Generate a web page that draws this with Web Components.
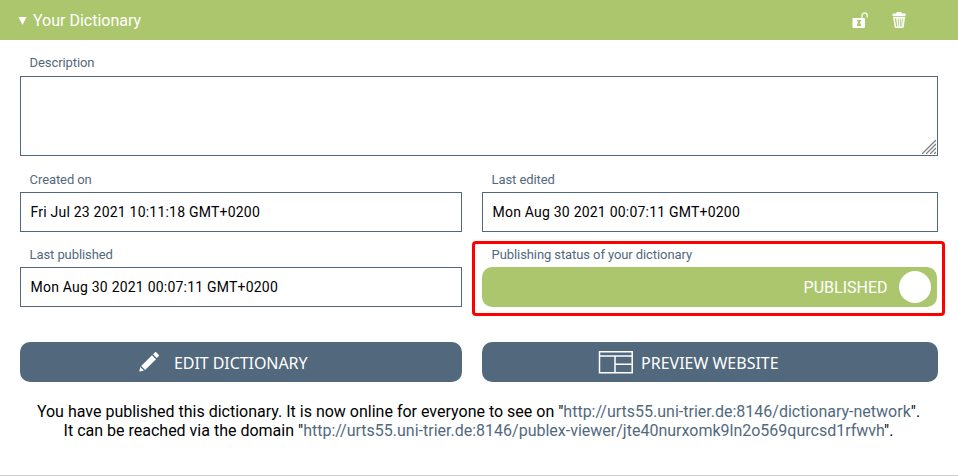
<!DOCTYPE html>
<html lang="en">
<head>
<meta charset="utf-8">
<title>Your Dictionary</title>
<style>
html,body{margin:0;background:#fff;overflow:hidden}
body{font-family:Roboto,"Liberation Sans",sans-serif;color:#000;height:476px}
</style>
</head>
<body>
<dictionary-page></dictionary-page>
<script>
function define(name, html) {
  const t = document.createElement('template');
  t.innerHTML = html;
  customElements.define(name, class extends HTMLElement {
    constructor() {
      super();
      this.attachShadow({mode: 'open'}).appendChild(t.content.cloneNode(true));
    }
  });
}

define('panel-header', `
<style>
:host{display:flex;align-items:center;height:40px;box-sizing:border-box;padding:0 51px 0 18px;background:#acc66d;color:#fff;font-size:16px}
.arrow{width:9px;height:8px;margin:1px 6px 0 0;display:block}
.title{flex:1;line-height:20px;padding-top:2px}
.lock{margin-right:23px}
svg{display:block}
</style>
<svg class="arrow" viewBox="0 0 9 8"><path fill="#fff" d="M.500 0h8L4.500 8z"/></svg>
<span class="title"><slot></slot></span>
<svg class="lock" width="17" height="17" viewBox="0 0 17 17"><path fill="#fff" fill-rule="evenodd" d="M1.500 6H12q1 0 1 1v8q0 1-1 1H1.500q-1 0-1-1V7q0-1 1-1zM5 8v1.500h1v1L5 13v1h4v-1l-1-2.500v-1h1V8z"/><path fill="none" stroke="#fff" stroke-opacity=".85" stroke-width="1.400" d="M10 6V3.500C10 .2 15.200.2 15.200 3.500V5.500"/></svg>
<svg width="15" height="18" viewBox="0 0 15 18"><path fill="#fff" d="M4.500 1h5v1.500h3.200q1 0 1 1V5H.500V3.500q0-1 1-1h3z"/><path fill="#fff" fill-opacity=".95" fill-rule="evenodd" d="M1 5.800h12.200L11.800 16q-.2 1-1.200 1H3.800q-1 0-1.200-1zM2.800 7.500 4.200 15.500h.9L4.200 7.500zM6 7.500v8h.7v-8zM8 7.500v8h.7l.1-8zM10.800 7.500 10 15.500h-.7l.8-8z"/></svg>
`);

define('form-field', `
<style>
:host{display:block;min-width:0}
.label{height:16px;line-height:16px;margin:0 0 5px;padding-left:9.600px;font-size:13px;letter-spacing:-.09px;color:#52697d;white-space:nowrap}
:host(.low) .label{height:17px;line-height:18px;margin-bottom:4px}
</style>
<div class="label"><slot name="label"></slot></div><slot></slot>
`);

define('text-value', `
<style>
:host{display:block;box-sizing:border-box;height:40px;border:1px solid #52697d;padding:0 9.600px;line-height:38px;font-size:14px;letter-spacing:.21px;white-space:nowrap}
</style><slot></slot>
`);

define('text-area', `
<style>
:host{display:flex;align-items:flex-end;justify-content:flex-end;box-sizing:border-box;height:80px;border:1px solid #52697d}
svg{display:block;margin:0 1px 1px 0}
</style>
<svg width="14" height="14" viewBox="0 0 14 14"><path fill="none" stroke="#808080" stroke-width="1.300" d="M0 14 14 0M4 14 14 4M8 14 14 8M12 14l2-2"/></svg>
`);

define('status-toggle', `
<style>
:host{display:flex;align-items:center;justify-content:flex-end;box-sizing:border-box;height:40px;margin-right:1px;padding-right:6px;border-radius:10px;background:#acc66d;color:#fff;font-size:16px}
i{width:32px;height:32px;border-radius:50%;background:#fff;margin-left:11.500px}
</style><slot></slot><i></i>
`);

define('action-button', `
<style>
:host{display:flex;align-items:center;box-sizing:border-box;height:40px;border-radius:10px;background:#52697d;color:#fff;font:16px/40px "Noto Sans",sans-serif;white-space:nowrap}
span{padding-top:2px}
:host(.edit) span{letter-spacing:-.07px}
</style><slot name="icon"></slot><span><slot></slot></span>
`);

define('highlight-frame', `
<style>
:host{position:absolute;left:-10px;top:-5px;width:473px;height:75px;box-sizing:border-box;border:3px solid #f00;border-radius:4px;pointer-events:none}
</style>
`);

define('dictionary-page', `
<style>
:host{display:flex;flex-direction:column;height:476px;box-sizing:border-box;border-bottom:1px solid #ccc}
main{padding:15px 20px 0;display:flex;flex-direction:column}
.grid{display:grid;grid-template-columns:442px 456px;column-gap:20px;row-gap:14px;margin-top:15px}
.actions{display:grid;grid-template-columns:442px 456px;column-gap:20px;margin-top:35px}
.status{position:relative}
.edit{padding-left:118px}.preview{padding-left:116px}
.edit svg{margin-right:13px}.preview svg{margin-right:7px}
svg{display:block}
p{margin:20px 0 0;font-size:16px;line-height:19px;text-align:center;white-space:nowrap;position:relative;left:-.5px}
a{color:#52697d}
</style>
<panel-header>Your Dictionary</panel-header>
<main>
<form-field><span slot="label">Description</span><text-area></text-area></form-field>
<div class="grid">
<form-field class="low"><span slot="label">Created on</span><text-value>Fri Jul 23 2021 10:11:18 GMT+0200</text-value></form-field>
<form-field class="low"><span slot="label">Last edited</span><text-value>Mon Aug 30 2021 00:07:11 GMT+0200</text-value></form-field>
<form-field class="low"><span slot="label">Last published</span><text-value>Mon Aug 30 2021 00:07:11 GMT+0200</text-value></form-field>
<form-field class="low status"><span slot="label">Publishing status of your dictionary</span><status-toggle>PUBLISHED</status-toggle><highlight-frame></highlight-frame></form-field>
</div>
<div class="actions">
<action-button class="edit"><svg slot="icon" width="23" height="22" viewBox="0 0 23 22"><path fill="#fff" d="M1.300 20.500 2.200 16 6 19.700zM3.200 15 14 4.300l4 4L7.100 18.900zM15 3.300 17 1.300q.6-.5 1.200 0l2.600 2.600q.5.6 0 1.200l-2 2z"/></svg>EDIT DICTIONARY</action-button>
<action-button class="preview"><svg slot="icon" width="36" height="24" viewBox="0 0 36 24"><path fill="none" stroke="#fff" stroke-width="1.500" d="M1.500 1.700h32.700V22.700H1.500zM1.500 6h32.700M17 6v16.700M17 14.300h17.200"/></svg>PREVIEW WEBSITE</action-button>
</div>
<p>You have published this dictionary. It is now online for everyone to see on "<a>http://urts55.uni-trier.de:8146/dictionary-network</a>".<br>It can be reached via the domain "<a>http://urts55.uni-trier.de:8146/publex-viewer/jte40nurxomk9ln2o569qurcsd1rfwvh</a>".</p>
</main>
`);
</script>
</body>
</html>
